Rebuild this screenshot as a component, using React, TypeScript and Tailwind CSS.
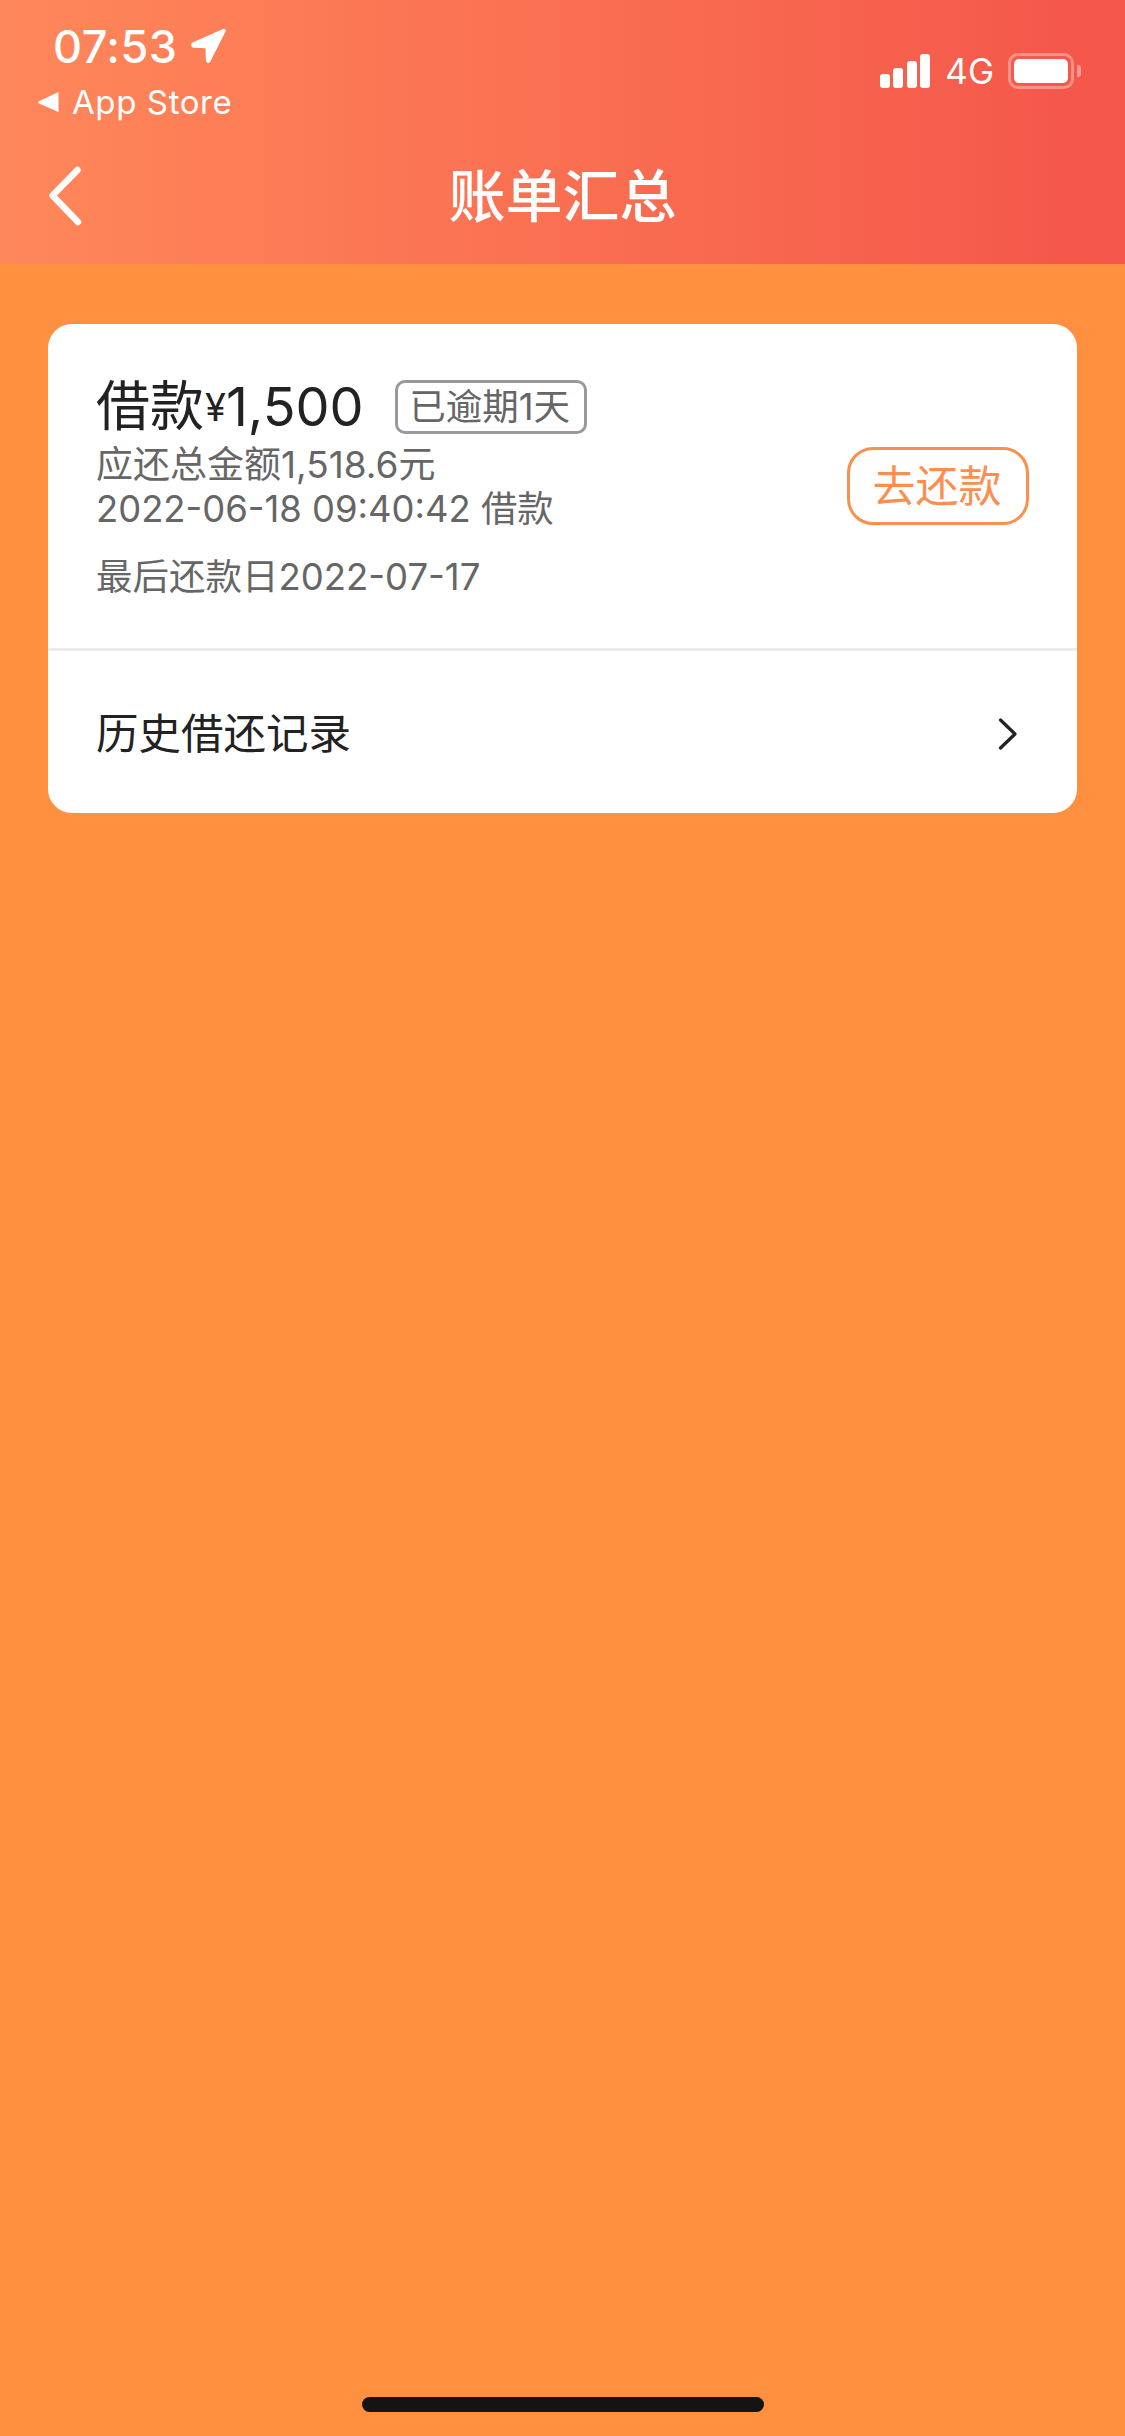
// App.tsx
const fontStack = "font-['Inter','Noto_Sans_CJK_SC',sans-serif]";

const StatusBar = () => (
  <div className="flex h-[128px] items-start justify-between pl-[38px] pr-[51px] text-white">
    <div>
      <div className="flex h-[68px] items-center pt-[24px] pl-[15px]">
        <span className="text-[45px] font-medium leading-none tracking-[0.5px]">07:53</span>
        <svg viewBox="0 0 36 36" className="ml-[12px] h-[36px] w-[36px]">
          <path d="M33 1 2.5 14.6C.2 15.7 1 19.6 3.5 19.7l12 .5.4 12.4c.1 2.5 3.4 3.2 4.5 1L35.5 3.6C36.3 1.9 34.7.3 33 1Z" fill="#fff" />
        </svg>
      </div>
      <div className="mt-[18px] flex h-[32px] items-center">
        <svg viewBox="0 0 21 22" className="h-[22px] w-[21px]">
          <path d="M20.5 1v20L1 12.5c-1-.6-1-1.6 0-2.2L20.5 1Z" fill="#fff" />
        </svg>
        <span className="ml-[13px] text-[33px] leading-none tracking-[0.6px]">App Store</span>
      </div>
    </div>
    <div className="flex items-center pt-[53px]">
      <div className="flex h-[34px] items-end gap-[3.5px]">
        <span className="h-[14px] w-[10px] rounded-[3px] bg-white" />
        <span className="h-[20px] w-[10px] rounded-[3px] bg-white" />
        <span className="h-[27px] w-[10px] rounded-[3px] bg-white" />
        <span className="h-[34px] w-[10px] rounded-[3px] bg-white" />
      </div>
      <span className="ml-[15px] text-[35px] leading-none">4G</span>
      <div className="relative ml-[14px] h-[36px] w-[66px] rounded-[10px] border-[3px] border-white/35 p-[3px]">
        <div className="h-full w-full rounded-[5px] bg-white" />
        <span className="absolute right-[-10px] top-[9px] h-[12px] w-[4px] rounded-r-[3px] bg-white/40" />
      </div>
    </div>
  </div>
);

const NavBar = () => (
  <div className="relative flex h-[136px] items-start justify-center">
    <svg viewBox="0 0 34 60" className="absolute left-[48px] top-[38px] h-[60px] w-[34px]">
      <path d="M29.5 4 4.5 29.5 30 56" fill="none" stroke="#fff" strokeWidth="6.5" strokeLinecap="round" strokeLinejoin="round" />
    </svg>
    <h1 className="mt-[35px] text-[57px] font-medium leading-[68px] text-white">账单汇总</h1>
  </div>
);

export default function App() {
  return (
    <div className={`${fontStack} min-h-[2436px] bg-[#ff9040]`}>
      <header className="h-[264px] bg-gradient-to-r from-[#ff875a] to-[#f4554a]">
        <StatusBar />
        <NavBar />
      </header>

      <main className="mx-[48px] mt-[60px] overflow-hidden rounded-[24px] bg-white">
        <section className="flex h-[327px] justify-between border-b-[3px] border-[#ececec] pl-[48px] pr-[48px]">
          <div className="pt-[48px]">
            <div className="flex h-[70px] items-center text-[#222]">
              <span className="text-[54px] leading-none">借款</span>
              <span className="ml-[1px] text-[38px] leading-none">¥</span>
              <span className="text-[54px] leading-none">1,500</span>
              <span className="ml-[31px] flex h-[54px] w-[192px] items-center justify-center rounded-[10px] border-[3px] border-[#999] pr-[2px] text-[36.5px] leading-none text-[#666]">
                已逾期1天
              </span>
            </div>
            <p className="text-[37px] leading-[45px] text-[#666]">应还总金额1,518.6元</p>
            <p className="text-[36.4px] leading-[45px] text-[#666]">2022-06-18 09:40:42 借款</p>
            <p className="mt-[23px] text-[36.5px] leading-[45px] text-[#666]">最后还款日2022-07-17</p>
          </div>
          <button className="mt-[123px] flex h-[78px] w-[182px] items-center justify-center rounded-[26px] border-[3px] border-[#fb8f4f] pr-[2px] text-[43px] leading-none text-[#fb8f4f]">
            去还款
          </button>
        </section>
        <section className="flex h-[162px] items-center justify-between pl-[48px] pr-[59px] pt-[4px]">
          <span className="text-[42.5px] leading-none text-[#222]">历史借还记录</span>
          <svg viewBox="0 0 20 32" className="h-[32px] w-[20px]">
            <path d="M2.5 2 17 16 2.5 30" fill="none" stroke="#222" strokeWidth="3.2" strokeLinecap="round" strokeLinejoin="round" />
          </svg>
        </section>
      </main>

      <div className="fixed bottom-[24px] left-[362px] h-[15px] w-[402px] rounded-full bg-[#141414]" />
    </div>
  );
}
